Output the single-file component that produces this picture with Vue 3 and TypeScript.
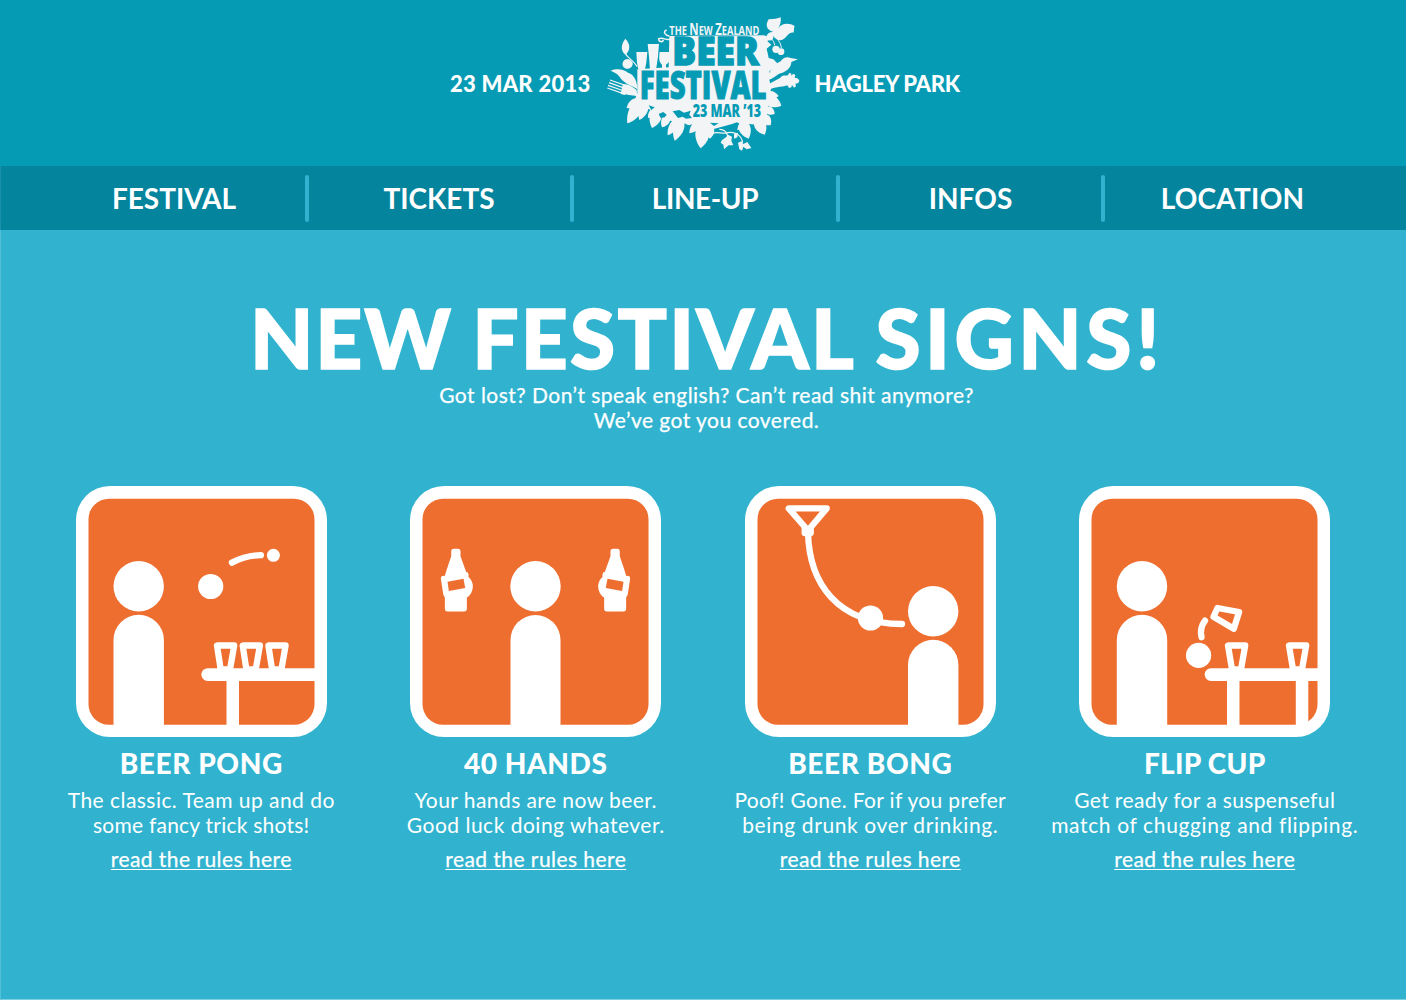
<script setup lang="ts">
interface Line {
  text: string
  tracking: number
}
interface Sign {
  id: string
  title: string
  lines: Line[]
}
type Leaf = [baseX: number, baseY: number, tipX: number, tipY: number, width: number]

const nav: string[] = ['Festival', 'Tickets', 'Line-up', 'Infos', 'Location']

const signs: Sign[] = [
  {
    id: 'pong',
    title: 'Beer Pong',
    lines: [
      { text: 'The classic. Team up and do', tracking: 0.46 },
      { text: 'some fancy trick shots!', tracking: 0.24 },
    ],
  },
  {
    id: 'hands',
    title: '40 Hands',
    lines: [
      { text: 'Your hands are now beer.', tracking: 0.44 },
      { text: 'Good luck doing whatever.', tracking: 0.5 },
    ],
  },
  {
    id: 'bong',
    title: 'Beer Bong',
    lines: [
      { text: 'Poof! Gone. For if you prefer', tracking: 0.34 },
      { text: 'being drunk over drinking.', tracking: 0.62 },
    ],
  },
  {
    id: 'flip',
    title: 'Flip Cup',
    lines: [
      { text: 'Get ready for a suspenseful', tracking: 0.36 },
      { text: 'match of chugging and flipping.', tracking: 0.64 },
    ],
  },
]

// foliage around the lower half of the crest
const leaves: Leaf[] = [
  [128, 272, 82, 346, 38],
  [120, 274, 80, 300, 26],
  [140, 284, 118, 336, 26],
  [176, 300, 156, 360, 36],
  [168, 300, 144, 330, 20],
  [206, 320, 186, 358, 26],
  [236, 330, 203, 382, 26],
  [246, 330, 224, 398, 32],
  [262, 330, 270, 352, 24],
  [300, 340, 268, 376, 24],
  [312, 340, 302, 421, 44],
  [330, 350, 330, 392, 26],
  [424, 335, 446, 392, 36],
  [440, 340, 412, 366, 20],
  [470, 330, 494, 380, 36],
  [486, 320, 512, 352, 30],
  [496, 300, 524, 318, 24],
  [490, 268, 544, 293, 36],
  [496, 258, 536, 264, 24],
]

function leafPath([bx, by, tx, ty, w]: Leaf): string {
  const dx = tx - bx
  const dy = ty - by
  const len = Math.hypot(dx, dy)
  const nx = (-dy / len) * w * 0.72
  const ny = (dx / len) * w * 0.72
  const c1 = `${bx + dx * 0.2 + nx} ${by + dy * 0.2 + ny} ${bx + dx * 0.7 + nx * 0.8} ${by + dy * 0.7 + ny * 0.8}`
  const c2 = `${bx + dx * 0.7 - nx * 0.8} ${by + dy * 0.7 - ny * 0.8} ${bx + dx * 0.2 - nx} ${by + dy * 0.2 - ny}`
  return `M${bx} ${by}C${c1} ${tx} ${ty}C${c2} ${bx} ${by}z`
}
</script>

<template>
  <div class="page">
    <header class="top">
      <span class="fact date">23 MAR 2013</span>
      <svg class="logo" viewBox="0 0 615 450" width="205" height="150">
        <g fill="#f2f4f5">
          <!-- crest body behind the lettering -->
          <path d="M208 84L492 82 514 90 502 100 514 110 500 122 504 140 506 150 520 154 534 168 518 182 508 190 508 216 514 240 508 262 500 326 470 350 410 344 330 366 290 352 240 344 200 336 160 308 118 294 104 276 112 256 112 184 206 178z" />
          <path v-for="(leaf, i) in leaves" :key="i" :d="leafPath(leaf)" />
          <!-- glasses -->
          <path d="M109 132h33l-3 32-4 20h-20l-4-20zM143 108h34l-3 38-6 40h-18l-3-40zM179 132h31c2 22-1 32-12 38v16h-12v-16c-10-8-9-22-7-38z" />
          <!-- bird, fork and bud on the left -->
          <path d="M32 188c18-8 40-5 52 6 16 4 28 22 28 50-14-10-34-14-48-30-6-12-16-20-32-26z" />
          <path d="M76 92c-12 16-16 34 0 48 16-12 16-32 0-48zM70 160c8-12 22-8 28 4 2 12-10 20-20 18-10-3-13-13-8-22z" />
          <g fill="none" stroke="#f2f4f5" stroke-width="3.500">
            <path d="M76 134c2 14 20 18 36 42" />
            <path d="M30 216l48 17M27 224l48 17M24 232l48 17M22 240l46 16" />
            <path d="M210 94c-14 4-20-8-34-2 0 10 12 12 14 4M208 84c-14-2-20-14-8-18" stroke-width="4.500" />
          </g>
          <path d="M68 230c18-4 26 6 42 16l2 20c-18-8-34-2-50-8z" />
          <!-- leaves, cherries, bird and guitar head on the right -->
          <path d="M500 94c-4-14 8-24 20-22-22-6-24-22-14-38 14 0 28-2 36-6 2 14-2 24-8 34 8-16 32-20 50-8-4 8 0 14-4 20-14-2-18 12-30 20-14 8-22-2-30-10 2 12-8 18-20 10z" />
          <circle cx="528" cy="124" r="11" /><circle cx="543" cy="131" r="10" />
          <path d="M524 112c-2-14-8-18-14-22M544 120c-2-18-12-28-22-34" fill="none" stroke="#f2f4f5" stroke-width="3" />
          <path d="M500 216c8-26 18-44 42-56 8-14 22-14 30-10l22 4-20 8c0 20-20 32-38 36-12 8-20 16-34 18z" />
          <path d="M502 230l38-20c8-12 18-6 24-8l4-8 6 3 0 6 6-6 6 4-2 8 8 2 6 6c0 8-6 10-12 10l2 8-6 4-6-8-2 7-7 2-5-8c-12 6-28 2-60 14z" />
          <!-- vine under the crest -->
          <path d="M326 386c18-22 38-6 58-12 18-4 40 4 44 30M358 364c18 0 28 14 24 30" fill="none" stroke="#f2f4f5" stroke-width="3.500" />
          <path d="M366 396l12-8 6-8 12 6-2 12 6 14-14 0-14 12-2-14-8-6zM402 378l12-4-2 14-10 4zM414 404l10-4 6 8 12-6 12 18-14 4-10-8-4 12-8-4z" />
        </g>
        <!-- gaps between the leaves -->
        <g fill="#059bb5">
          <path d="M218 310l20-4 14 8 20-6-4 12 8 10-18 2-10-6-14 4zM176 318l14-6 10 8-6 8-12 2zM146 292l18 6-10 8zM330 344l26 2-14 8zM398 348l12-5 8 6-10 4z" />
          <g class="crest-type">
            <text x="217" y="172" font-size="114" textLength="260" lengthAdjust="spacingAndGlyphs" stroke="#059bb5" stroke-width="4">BEER</text>
            <text x="119" y="272" font-size="116" textLength="381" lengthAdjust="spacingAndGlyphs" stroke="#059bb5" stroke-width="3">FESTIVAL</text>
            <text x="278" y="328" font-size="53" textLength="205" lengthAdjust="spacingAndGlyphs">23 MAR ’13</text>
          </g>
        </g>
        <text class="crest-top" x="208" y="81" fill="#f2f4f5" font-size="37" textLength="270" lengthAdjust="spacingAndGlyphs">THE <tspan class="cap">N</tspan>EW <tspan class="cap">Z</tspan>EALAND</text>
      </svg>
      <span class="fact place">HAGLEY PARK</span>
    </header>

    <nav class="nav">
      <a v-for="item in nav" :key="item" :class="item.toLowerCase()">{{ item.toUpperCase() }}</a>
    </nav>

    <main>
      <h1><span class="new">NEW</span> <span class="fest">FESTIVAL</span> <span class="word">SIGNS!</span></h1>
      <p class="intro">Got lost? Don’t speak english? Can’t read shit anymore?<br />We’ve got you covered.</p>

      <section class="signs">
        <article v-for="sign in signs" :key="sign.id" :class="sign.id">
          <svg class="sign" viewBox="0 0 251 251" width="251" height="251">
            <rect width="251" height="251" rx="34" fill="#fff" />
            <rect x="12.500" y="12.700" width="226" height="226" rx="20.500" fill="#ee6e2f" />
            <g v-if="sign.id === 'pong'" class="ink">
              <circle cx="62.700" cy="100.300" r="25.200" />
              <path d="M37.500 240v-86a25.200 25.200 0 0 1 50.400 0v86zM150.500 192h12.500v48h-12.500z" />
              <path d="M240 182.200H131.700a6.350 6.350 0 0 0 0 12.700H240z" />
              <circle cx="134.700" cy="100.500" r="12.600" />
              <circle cx="197.400" cy="69.300" r="6.500" />
              <path d="M155.900 76.600c9-4.700 18-7.300 29-7.500" class="line" />
              <path v-for="x in [0, 25.700, 51.400]" :key="x" :transform="`translate(${x} 0)`" d="M141 159.500h17.200l-4.200 24h-9.300z" class="cup" />
            </g>
            <g v-else-if="sign.id === 'hands'" class="ink">
              <circle cx="125.500" cy="100.300" r="25.200" />
              <path d="M100.500 240v-86a25 25 0 0 1 50 0v86z" />
              <g v-for="side in [0, 1]" :key="side" :transform="side ? 'translate(251 0) scale(-1 1)' : undefined">
                <g transform="translate(-4.800 -6.200) scale(.3333)">
                  <path d="M146 207h12q8 0 8 8v14l17 48q7 0 7 7v8a38 38 0 0 1 13 29q-2 24-18 32v34q0 8-8 8h-50q-8 0-8-8v-34q-4-4-5-10l-7-46q-1-7 5-8l7-1q1-6 19-59v-14q0-8 8-8z" />
                  <path d="M127 306l48-9 5 28-49 9z" fill="#ee6e2f" />
                </g>
              </g>
            </g>
            <g v-else-if="sign.id === 'bong'" class="ink">
              <circle cx="188.200" cy="125.300" r="25.200" />
              <path d="M163 240v-61a25.200 25.200 0 0 1 50.400 0v61z" />
              <path d="M43.700 22.400h38L63 44.500z" class="line" />
              <path d="M59.700 47v-4l3 1 3-1v4z" class="line" />
              <path d="M63 46C64 97 92 138 157 138" class="line" />
              <circle cx="125.500" cy="132" r="12.600" />
            </g>
            <g v-else class="ink">
              <circle cx="63" cy="100.300" r="25.200" />
              <path d="M37.800 240v-86a25.200 25.200 0 0 1 50.400 0v86zM148 192h12.500v48H148zM216.800 192h12.500v48h-12.500z" />
              <path d="M240 182.200H132a6.350 6.350 0 0 0 0 12.700H240z" />
              <circle cx="119.600" cy="169.400" r="12.600" />
              <path d="M126 134.700q-5.500 7-3.500 16.500" class="line" />
              <path d="M149 159.500h17.200l-4.200 24H153z" class="cup" />
              <path d="M210 159.500h17.200l-4.200 24H214z" class="cup" />
              <path d="M138.500 122l21.600 4-5.300 16.700-20.300-12z" class="cup" />
            </g>
          </svg>
          <h2>{{ sign.title.toUpperCase() }}</h2>
          <p class="copy">
            <span v-for="line in sign.lines" :key="line.text" :style="{ letterSpacing: line.tracking + 'px' }">{{ line.text }}</span>
          </p>
          <a class="rules">read the rules here</a>
        </article>
      </section>
    </main>
  </div>
</template>

<style>
body {
  margin: 0;
  background: #31b3cf;
}
</style>

<style scoped>
.page {
  display: flex;
  flex-direction: column;
  width: 1406px;
  height: 1000px;
  overflow: hidden;
  background: #31b3cf;
  color: #fff;
  font-family: Lato, 'Open Sans', sans-serif;
}
.top {
  display: grid;
  grid-template-columns: 600px 205px 1fr;
  height: 158px;
  padding-top: 8px;
  background: #059bb5;
}
.logo {
  overflow: visible;
}
.fact {
  padding-top: 60px;
  font-size: 22px;
  line-height: 32px;
  font-weight: 900;
  white-space: nowrap;
}
.date {
  padding-left: 450px;
  letter-spacing: 0.25px;
}
.place {
  padding-left: 9.500px;
  letter-spacing: -0.300px;
}
.crest-type {
  font-family: 'Open Sans', sans-serif;
  font-weight: 800;
}
.crest-top {
  font-family: 'Open Sans', sans-serif;
  font-weight: 700;
}
.cap {
  font-size: 46px;
}
.nav {
  display: grid;
  grid-template-columns: 306px 265px 266px 265px 1fr;
  height: 64px;
  border-left: 1px solid #1a8fa8;
  background: #05849d;
}
.nav a {
  position: relative;
  font-size: 28px;
  line-height: 65px;
  font-weight: 700;
  text-align: center;
}
.nav a:not(:last-child)::after {
  content: '';
  position: absolute;
  right: -2px;
  top: 9px;
  width: 4px;
  height: 47px;
  border-radius: 2px;
  background: #31b3cf;
}
.nav .festival {
  padding-left: 40px;
}
.nav .tickets {
  padding-right: 1px;
}
.nav .line-up {
  letter-spacing: -0.400px;
}
.nav .location {
  padding-right: 44px;
  letter-spacing: 0.250px;
}
main {
  flex: 1;
  border-left: 1px solid #52c0d8;
  border-bottom: 1px solid #7dd0e1;
}
h1 {
  margin: 0;
  padding: 57px 0 0 3px;
  font-size: 82px;
  line-height: 100px;
  font-weight: 900;
  text-align: center;
  white-space: nowrap;
  -webkit-text-stroke: 1.500px #fff;
}
.new {
  letter-spacing: 1.800px;
}
.fest {
  letter-spacing: 2.200px;
}
.word {
  margin-right: -4px;
  letter-spacing: 4.500px;
}
.intro {
  margin: -5px 0 0;
  padding-left: 6px;
  font-size: 21px;
  line-height: 25px;
  letter-spacing: 0.470px;
  text-align: center;
  -webkit-text-stroke: 0.250px #fff;
}
.signs {
  display: flex;
  justify-content: center;
  margin: 54px 1px 0 0;
}
article {
  width: 334.500px;
  display: flex;
  flex-direction: column;
  align-items: center;
}
.sign {
  display: block;
}
.ink {
  fill: #fff;
}
.line {
  fill: none;
  stroke: #fff;
  stroke-width: 6.300;
  stroke-linecap: round;
  stroke-linejoin: round;
}
.cup {
  fill: none;
  stroke: #fff;
  stroke-width: 6.300;
  stroke-linejoin: round;
}
h2 {
  margin: 9px 0 0;
  font-size: 28px;
  line-height: 34px;
  font-weight: 900;
  letter-spacing: 0.600px;
}
.flip h2 {
  letter-spacing: 0.300px;
}
.copy {
  display: flex;
  flex-direction: column;
  align-items: center;
  margin: 7px 0 0;
  font-size: 21px;
  line-height: 25px;
  white-space: nowrap;
}
.rules {
  margin-top: 9px;
  font-size: 21px;
  line-height: 25px;
  letter-spacing: 0.440px;
  text-decoration: underline;
  text-decoration-thickness: 1px;
  text-underline-offset: 2px;
  -webkit-text-stroke: 0.250px #fff;
}
</style>
